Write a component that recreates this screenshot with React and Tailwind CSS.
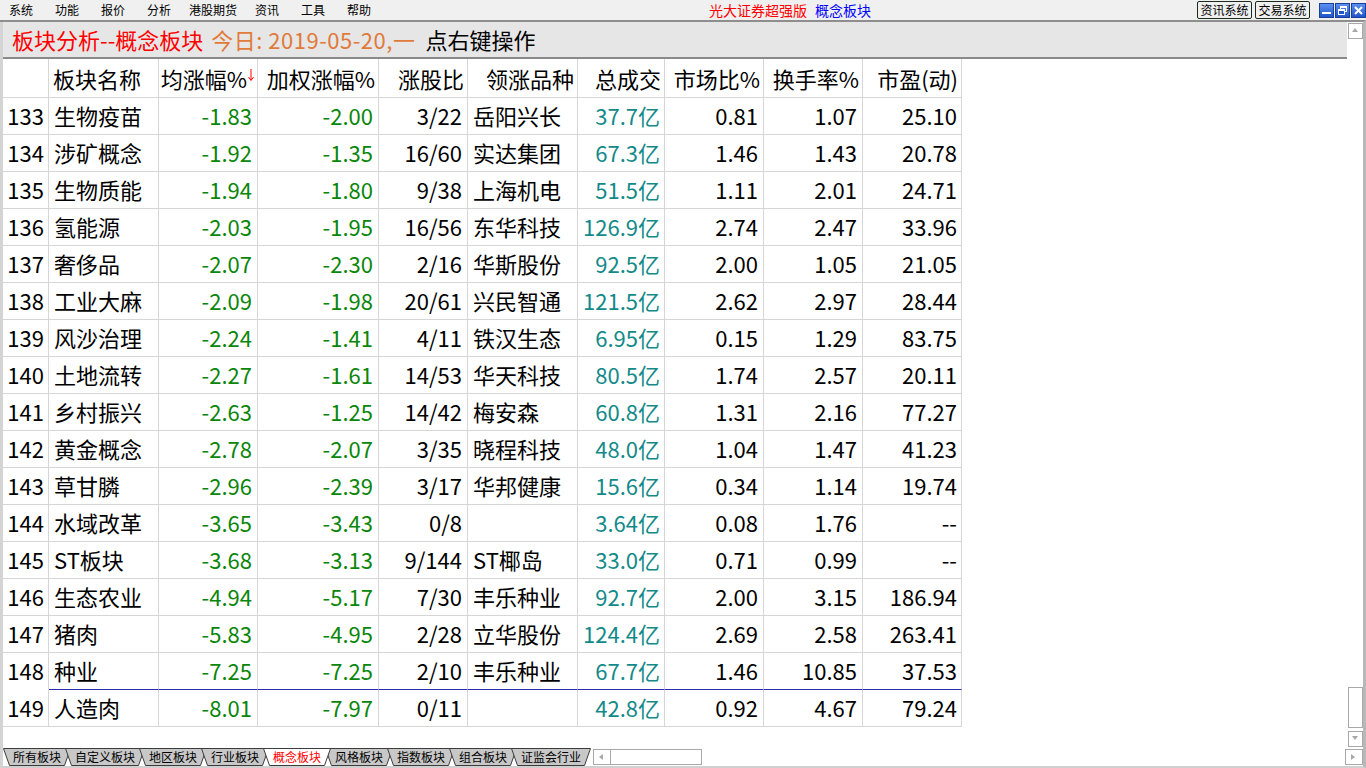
import React from "react";

const menus = [
  { t: "系统", w: "w-[46px]" },
  { t: "功能", w: "w-[46px]" },
  { t: "报价", w: "w-[46px]" },
  { t: "分析", w: "w-[42px]" },
  { t: "港股期货", w: "w-[66px]" },
  { t: "资讯", w: "w-[46px]" },
  { t: "工具", w: "w-[46px]" },
  { t: "帮助", w: "w-[46px]" },
];

const rows = [
  ["133", "生物疫苗", "-1.83", "-2.00", "3/22", "岳阳兴长", "37.7亿", "0.81", "1.07", "25.10"],
  ["134", "涉矿概念", "-1.92", "-1.35", "16/60", "实达集团", "67.3亿", "1.46", "1.43", "20.78"],
  ["135", "生物质能", "-1.94", "-1.80", "9/38", "上海机电", "51.5亿", "1.11", "2.01", "24.71"],
  ["136", "氢能源", "-2.03", "-1.95", "16/56", "东华科技", "126.9亿", "2.74", "2.47", "33.96"],
  ["137", "奢侈品", "-2.07", "-2.30", "2/16", "华斯股份", "92.5亿", "2.00", "1.05", "21.05"],
  ["138", "工业大麻", "-2.09", "-1.98", "20/61", "兴民智通", "121.5亿", "2.62", "2.97", "28.44"],
  ["139", "风沙治理", "-2.24", "-1.41", "4/11", "铁汉生态", "6.95亿", "0.15", "1.29", "83.75"],
  ["140", "土地流转", "-2.27", "-1.61", "14/53", "华天科技", "80.5亿", "1.74", "2.57", "20.11"],
  ["141", "乡村振兴", "-2.63", "-1.25", "14/42", "梅安森", "60.8亿", "1.31", "2.16", "77.27"],
  ["142", "黄金概念", "-2.78", "-2.07", "3/35", "晓程科技", "48.0亿", "1.04", "1.47", "41.23"],
  ["143", "草甘膦", "-2.96", "-2.39", "3/17", "华邦健康", "15.6亿", "0.34", "1.14", "19.74"],
  ["144", "水域改革", "-3.65", "-3.43", "0/8", "", "3.64亿", "0.08", "1.76", "--"],
  ["145", "ST板块", "-3.68", "-3.13", "9/144", "ST椰岛", "33.0亿", "0.71", "0.99", "--"],
  ["146", "生态农业", "-4.94", "-5.17", "7/30", "丰乐种业", "92.7亿", "2.00", "3.15", "186.94"],
  ["147", "猪肉", "-5.83", "-4.95", "2/28", "立华股份", "124.4亿", "2.69", "2.58", "263.41"],
  ["148", "种业", "-7.25", "-7.25", "2/10", "丰乐种业", "67.7亿", "1.46", "10.85", "37.53"],
  ["149", "人造肉", "-8.01", "-7.97", "0/11", "", "42.8亿", "0.92", "4.67", "79.24"],
];

const headers = ["", "板块名称", "均涨幅%", "加权涨幅%", "涨股比", "领涨品种", "总成交", "市场比%", "换手率%", "市盈(动)"];

// alignment / colour per column
const colCls = [
  "justify-end pr-[4px] text-black",
  "justify-start pl-[5px] text-black",
  "justify-end pr-[5px] text-[#0a860a]",
  "justify-end pr-[5px] text-[#0a860a]",
  "justify-end pr-[5px] text-black",
  "justify-start pl-[5px] text-black",
  "justify-end pr-[4px] text-[#138a8a]",
  "justify-end pr-[5px] text-black",
  "justify-end pr-[5px] text-black",
  "justify-end pr-[4px] text-black",
];

const gridCols = "grid grid-cols-[46px_110px_99px_121px_89px_110px_87px_99px_99px_99px] w-[960px]";

const tabs = ["所有板块", "自定义板块", "地区板块", "行业板块", "概念板块", "风格板块", "指数板块", "组合板块", "证监会行业"];

const WinBtn = ({ children }) => (
  <div className="w-[15px] h-[15px] bg-gradient-to-b from-[#5d8ff0] to-[#1f55c9] border border-[#1a3f9a] flex items-center justify-center">
    <svg width="11" height="11" viewBox="0 0 11 11">{children}</svg>
  </div>
);

const Tri = ({ dir }) => {
  const pts = {
    up: "1,5 4,1 7,5",
    down: "1,1 4,5 7,1",
    left: "5,1 1,4 5,7",
    right: "1,1 5,4 1,7",
  }[dir];
  return (
    <svg width="8" height="8" viewBox="0 0 8 8">
      <polygon points={pts} fill="#a8a8a8" />
    </svg>
  );
};

export default function App() {
  return (
    <div className="w-[1366px] h-[768px] flex flex-col bg-white overflow-hidden font-['Noto_Sans_CJK_SC',sans-serif]">
      {/* Menu bar */}
      <div className="h-[20px] bg-[#f0f0f0] flex items-center text-[12px] text-black shrink-0">
        <div className="flex pl-[9px]">
          {menus.map((m) => (
            <span key={m.t} className={`${m.w} leading-[20px]`}>{m.t}</span>
          ))}
        </div>
        <div className="ml-[316px] flex gap-[8px] text-[14px] leading-[20px]">
          <span className="text-[#ff0000]">光大证券超强版</span>
          <span className="text-[#0000ff]">概念板块</span>
        </div>
        <div className="ml-auto flex items-center gap-[3px] pr-0">
          <div className="h-[18px] w-[55px] border-[1.5px] border-[#1c2c1c] rounded-[2px] flex items-center justify-center leading-none">资讯系统</div>
          <div className="h-[18px] w-[55px] border-[1.5px] border-[#1c2c1c] rounded-[2px] flex items-center justify-center leading-none">交易系统</div>
          <div className="flex gap-[1px] ml-[6px]">
            <WinBtn>
              <rect x="1" y="7" width="9" height="2" fill="#fff" />
            </WinBtn>
            <WinBtn>
              <rect x="3.5" y="1.5" width="6" height="5" fill="none" stroke="#fff" />
              <rect x="3.5" y="1.5" width="6" height="1.5" fill="#fff" />
              <rect x="1.5" y="4.5" width="6" height="5" fill="#1f55c9" stroke="#fff" />
              <rect x="1.5" y="4.5" width="6" height="1.5" fill="#fff" />
            </WinBtn>
            <WinBtn>
              <path d="M2 2 L9 9 M9 2 L2 9" stroke="#fff" strokeWidth="2" />
            </WinBtn>
          </div>
        </div>
      </div>

      {/* Main frame */}
      <div className="flex flex-1 min-h-0 border-t-2 border-[#8e8e8e] border-r-[3px] border-r-[#b8b8b8]">
        <div className="flex-1 flex flex-col border-l-[3px] border-[#d4d4d4]">
          {/* Title */}
          <div className="h-[37px] shrink-0 bg-[#e6e6e6] border-b-2 border-[#8a8a8a] flex items-center pl-[9px] pb-[1px] text-[22px] leading-none">
            <span className="text-[#ff0000]">板块分析--概念板块</span>
            <span className="text-[#e07a3a] ml-[8px] tracking-[0.5px]">今日: 2019-05-20,一</span>
            <span className="text-black ml-[10px]">点右键操作</span>
          </div>

          {/* Table */}
          <div className="text-[22px] leading-none">
            <div className={`${gridCols} h-[39px]`}>
              {headers.map((h, i) => (
                <div
                  key={i}
                  className={`flex items-center pb-[1px] border-b border-r border-[#d6d6d6] text-black ${
                    i === 1 ? "justify-start pl-[4px]" : "justify-end pr-[3px]"
                  }`}
                >
                  <span>{h}</span>
                  {i === 2 && (
                    <svg width="6" height="12" viewBox="0 0 6 12" className="ml-[1px] -mt-[6px]">
                      <path d="M3 0 V11" stroke="#ff0000" strokeWidth="1" />
                      <path d="M0.5 8 L3 11.5 L5.5 8" fill="none" stroke="#ff0000" strokeWidth="1" />
                    </svg>
                  )}
                </div>
              ))}
            </div>
            {rows.map((r, ri) => (
              <div key={r[0]} className={`${gridCols} h-[37px]`}>
                {r.map((c, ci) => {
                  const blue = ri === 15;
                  const border =
                    blue && ci > 0
                      ? "border-b border-b-[#2d2db4]"
                      : blue
                      ? "border-b border-b-white"
                      : "border-b border-b-[#d6d6d6]";
                  return (
                    <div
                      key={ci}
                      className={`flex items-center pb-[2px] border-r border-r-[#d6d6d6] ${border} ${colCls[ci]}`}
                    >
                      {c}
                    </div>
                  );
                })}
              </div>
            ))}
          </div>
          <div className="flex-1" />
        </div>

        {/* Vertical scrollbar */}
        <div className="w-[16px] shrink-0 flex flex-col items-center">
          <div className="mt-[1px] w-[15px] h-[16px] border border-[#a8a8a8] flex items-center justify-center">
            <Tri dir="up" />
          </div>
          <div className="flex-1 w-full flex flex-col justify-end items-center pb-[3px]">
            <div className="w-[15px] h-[41px] border border-[#a8a8a8]" />
          </div>
          <div className="w-[15px] h-[16px] border border-[#a8a8a8] flex items-center justify-center">
            <Tri dir="down" />
          </div>
        </div>
      </div>

      {/* Bottom tabs row */}
      <div className="h-[21px] shrink-0 flex border-b-2 border-[#d0d0d0] border-r-[3px] border-r-[#b8b8b8] border-l-[3px] border-l-[#d4d4d4]">
        <div className="flex pt-[1px]">
          {tabs.map((t, i) => {
            const w = t.length === 5 ? 80 : 68;
            const active = t === "概念板块";
            return (
              <div
                key={t}
                className={`relative h-[18px] shrink-0 ${t.length === 5 ? "w-[80px]" : "w-[68px]"} ${
                  i === 0 ? "" : "-ml-[6px]"
                } ${active ? "z-10" : ""}`}
              >
                <svg width={w} height="18" className="absolute left-0 top-0">
                  <polygon
                    points={`0.5,0.5 ${w - 0.5},0.5 ${w - 6.5},17.5 6.5,17.5`}
                    fill={active ? "#ffffff" : "#c8c8c8"}
                    stroke="#3c3c3c"
                    strokeWidth="1"
                  />
                </svg>
                <span
                  className={`relative block pl-[10px] text-[12px] leading-[18px] ${
                    active ? "text-[#ff0000]" : "text-black"
                  }`}
                >
                  {t}
                </span>
              </div>
            );
          })}
        </div>
        <div className="ml-[2px] mt-[2px] flex h-[16px]">
          <div className="w-[18px] h-[16px] border border-[#a8a8a8] flex items-center justify-center">
            <Tri dir="left" />
          </div>
          <div className="w-[91px] h-[16px] border border-l-0 border-[#a8a8a8]" />
        </div>
        <div className="flex-1" />
        <div className="mt-[2px] w-[18px] h-[16px] border border-[#a8a8a8] flex items-center justify-center">
          <Tri dir="right" />
        </div>
      </div>
    </div>
  );
}
